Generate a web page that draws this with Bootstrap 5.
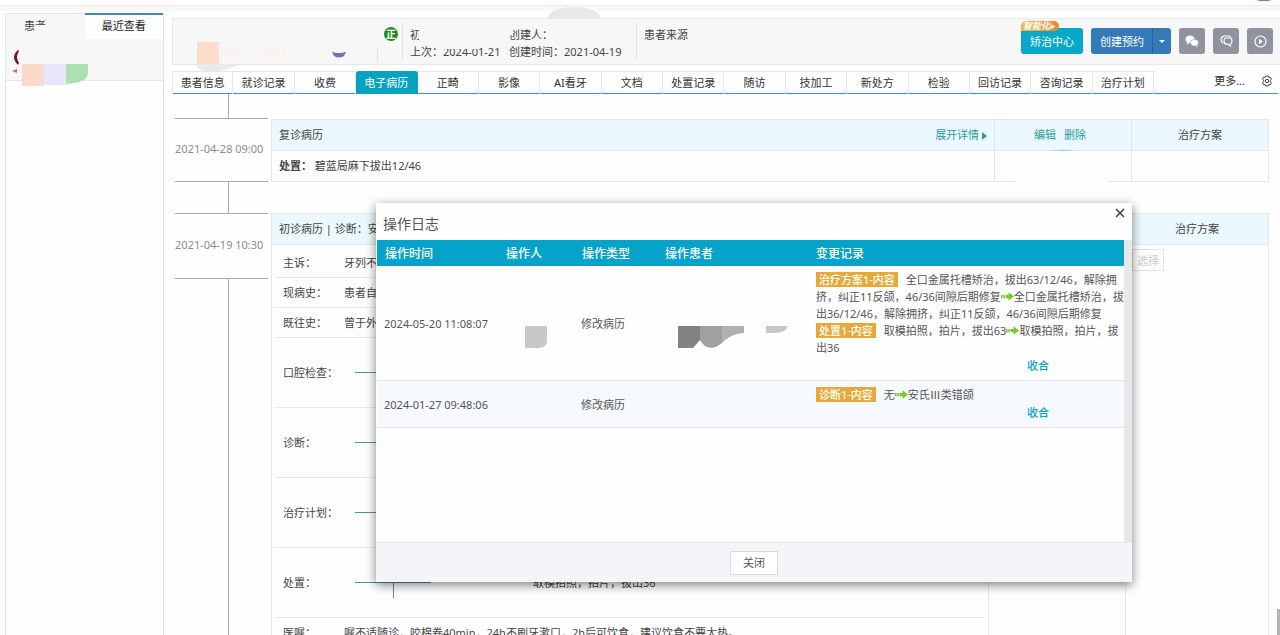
<!DOCTYPE html>
<html lang="zh-CN">
<head>
<meta charset="utf-8">
<meta name="viewport" content="width=device-width, initial-scale=1">
<title>电子病历</title>
<link href="https://cdn.jsdelivr.net/npm/bootstrap@5.3.0/dist/css/bootstrap.min.css" rel="stylesheet">
<style>
body{font-family:"Noto Sans","Noto Sans CJK SC",sans-serif;font-size:11px;line-height:17px;color:#444;background:#fefefe;height:100vh;overflow:hidden}
a{text-decoration:none;color:#2b9c9e}
.btn{font-size:11px;line-height:17px;border-radius:3px}
.shell{min-height:0}
.top-strip{height:13px;border-top:5px solid #fefefe;background:linear-gradient(#ededee 0 1px,#f7f7f8 1px 6px,#fefefe 6px)}
.strip-dot{position:absolute;top:-7px;right:8px;width:16px;height:8px;border-radius:8px;background:#3e9a93}
.smear-arc{position:absolute;left:547px;top:7px;width:54px;height:12px;border-radius:27px 27px 0 0/12px 12px 0 0;background:#e6e9ea}
.side{width:159px;margin-left:5px;border:1px solid #e3e3e3;border-width:0 1px;flex:none}
.side-tabs button{border:0;height:26px;padding:0 0 3px;background:#f7f7f8;border-top:1px solid #e3e3e3;width:50%;font-size:11px;color:#444}
.side-tabs button:first-child{text-align:left;padding-left:18px}
.side-tabs button.on{background:#fefefe;border-top:2px solid #3d8ea6;color:#222}
.side-pane{height:42px;background:#f7f7f8;border-bottom:1px solid #e6e6e6}
.side-art{left:4px;top:34px}
.smudge{position:absolute;background:#f7f7f8}
.page-main{margin-left:8px;min-width:0}
.patient{height:47px;margin-top:5px;background:#f7f7f8;border:1px solid #e8e8e9;border-right:0;padding-right:7px}
.patient .rule{width:1px;height:36px;background:#e2e2e4;flex:none}
.patient-art{width:205px;height:56px;flex:none}
.zheng{width:14px;height:14px;border-radius:50%;background:#1b8f1b;color:#fff;font-size:10px;line-height:14px;text-align:center;font-weight:700;margin:8px 0 0 6px}
.info{padding:7px 0 0 7px}
.head-actions{padding-top:9px}
.btn-ortho,.btn-ortho:hover{background:#05a8c8;color:#fff}
.btn-ortho{width:62px;height:26px;padding:0}
.smart{position:absolute;left:0;top:-7px;height:10px;width:38px;padding-left:2px;border-radius:6px 6px 6px 0;background:linear-gradient(90deg,#f3b955,#e98a35);color:#fff;font:italic 700 9px/10px "Noto Sans CJK SC",sans-serif;white-space:nowrap;z-index:2;overflow:hidden}
.btn-book,.btn-book:hover{background:#337ab7;color:#fff}
.btn-book{height:26px;width:62px;padding:0}
.btn-book.dropdown-toggle-split{width:19px;border-left:1px solid #286494}
.btn-book.dropdown-toggle-split::after{border-width:3px 3px 0;margin:0}
.btn-ico{background:#8f939f;width:26px;height:26px;padding:0}
.tabs-row{margin-top:6px;height:23px;border-bottom:1px solid #3d9bb0;margin-right:2px}
.tabs-row .tab-grid{display:grid;grid-template-columns:repeat(16,minmax(0,1fr));flex:1}
.tab-grid a{border:1px solid #e6e6e6;border-width:1px 1px 0 0;text-align:center;line-height:22px;color:#333;white-space:nowrap}
.tab-grid a:first-child{border-left-width:1px}
.tab-grid a.active{background:#05a3c0;color:#fff;border-color:#05a3c0;border-radius:3px 3px 0 0}
.tab-tools{width:124px;padding:0 5px 4px 0}
.tab-tools a{color:#333}
.records{display:grid;grid-template-columns:93px minmax(0,1fr);column-gap:3px;padding:0 11px 0 3px;min-height:0;flex:1;overflow:hidden}
.rail .stem{margin-left:53px;border-left:1px solid #a8a8a8;height:31px}
.rail .stem.first{height:24px}
.rail .stamp{height:64px;border:1px solid #a8a8a8;border-width:1px 0;display:flex;align-items:center;color:#8c8c8c;white-space:nowrap;padding-bottom:3px}
.rail .stamp.tall{height:66px}
.rec{width:100%;border-collapse:collapse;table-layout:fixed;margin-top:25px}
.rec + .rec{margin-top:31px}
.rec th,.rec td{border:1px solid #e4e7e9;padding:0 7px 2px;height:31px;font-weight:400}
.rec th{background:#ebf8fe}
.rec th.ops{padding-right:13px}
.col-ops{width:137px}
.col-plan-a{width:137px}
.col-plan-b{width:143px}
.rec td.detail{padding:3px 3px 0;height:auto;vertical-align:top}
.rec td.detail ~ td{vertical-align:top;padding:4px 6px}
.item{border-bottom:1px solid #e8e8e8;height:30px;padding-left:8px;white-space:nowrap}
.item.big{height:70px}
.item .lab{width:61px;flex:none}
.tooth{width:76px;height:30px;margin:0 102px 0 11px;background:linear-gradient(#4e90ab,#4e90ab) 0 50%/100% 1px no-repeat,linear-gradient(#4e90ab,#4e90ab) 50% 0/1px 100% no-repeat}
.item.big:not(:nth-child(7)) .tooth{background-size:100% 1px,0 0}
.btn-pick{width:32px;height:22px;border:1px solid #e2e2e2;background:#fefefe;color:#ccc;padding:0;border-radius:0}
.veil{left:1012px;top:149px}
.page-scroll{position:absolute;right:0;bottom:0;width:3px;height:26px;background:#b5b5b8}
.log{position:absolute;left:376px;right:148px;top:203px;background:#fefefe;box-shadow:0 3px 10px rgba(0,0,0,.5);z-index:10;color:#555}
.log-head{height:37px;padding:12px 7px 0}
.log-head h2{font-size:14px;line-height:18px;font-weight:400;margin:0;color:#555}
.log-close{border:0;background:none;padding:0;line-height:0;margin-top:-7px}
.log-body{height:302px;padding:0 8px 0 1px;background:linear-gradient(#e8e8ea,#e8e8ea) 100% 0/8px 100% no-repeat}
.log-table{width:100%;table-layout:fixed;border-collapse:collapse}
.log-table th{background:#05a3c9;color:#fff;height:26px;font-size:12px;padding:0 8px;font-weight:500;white-space:nowrap}
.log-table td{border-bottom:1px solid #e3e5e8;padding:5px 0 5px 7px;white-space:nowrap}
.log-table td:last-child{padding-left:8px}
.log-table tr.alt td{background:#f6f9fd}
.c-time{width:121px}.c-who{width:76px}.c-type{width:83px}.c-patient{width:151px}
.tag{background:#e6a935;color:#fff;display:inline-block;line-height:15px;padding:0 3px;margin-right:8px;font-weight:500}
.arrow{width:13px;height:9px;vertical-align:0}
.fold{display:block;line-height:19px;padding-left:211px;color:#0aa3c2;font-weight:500}
.log-foot{height:40px;background:#f3f5f8;border-top:1px solid #e6e7ea}
.btn-shut{width:48px;height:24px;padding:0;border:1px solid #dcdcde;border-radius:0;background:#fff;color:#555}
.masked{margin-top:28px;display:block}
</style>
</head>
<body class="d-flex flex-column position-relative">
<svg width="0" height="0" class="position-absolute"><defs>
<symbol id="arr" viewBox="0 0 12 8"><path d="M0 2.500h1.500v3H0zM2.200 2.500h1.600v3H2.200zM4.500 2.500H7V0L12 4 7 8V5.500H4.500z" fill="#7bc728"/></symbol>
</defs></svg>
<div class="top-strip flex-shrink-0"></div>
<div class="strip-dot"></div>
<div class="smear-arc"></div>
<div class="shell d-flex flex-grow-1">
  <aside class="side position-relative">
    <div class="side-tabs d-flex"><button type="button">患者</button><button type="button" class="on">最近查看</button></div>
    <div class="side-pane"></div>
    <div class="smudge" style="left:29px;top:12px;width:18px;height:10px"></div>
    <svg class="side-art position-absolute" width="84" height="42" viewBox="0 0 84 42">
      <path d="M8 3Q0 10 8 18L9 16Q5 10 9 4z" fill="#75142b"/><path d="M2 24l5-2v4z" fill="#d0637c"/>
      <path d="M12 17h22v22H12z" fill="#fadac8"/><path d="M34 17h22v21H34z" fill="#e9e4fa"/><path d="M56 17h22v9q0 10-22 11z" fill="#ade0b0"/>
    </svg>
  </aside>
  <main class="page-main d-flex flex-column flex-grow-1">
    <section class="patient d-flex align-items-start flex-shrink-0">
      <svg class="patient-art" viewBox="0 0 205 56">
        <path d="M24 45h43q-18 9-35 7-8-1-8-7z" fill="#e9e9eb"/><path d="M24 23h22v22H24z" fill="#fcdccb"/><path d="M46 23h22v20H46z" fill="#f8f4f3"/><path d="M90 23h22v20H90z" fill="#faf4f0"/>
        <path d="M159 33l4 1h5l5-1-2 4q-5 3-10 0z" fill="#7c6cba"/><path d="M204 29h1v14h-1z" fill="#e2e2e4"/>
      </svg>
      <div class="zheng">正</div>
      <div class="rule mt-1 ms-1"></div>
      <div class="info" style="width:106px"><div>初</div><div>上次：2024-01-21</div></div>
      <div class="info flex-shrink-0 ps-0" style="width:127px"><div>创建人：</div><div>创建时间：2021-04-19</div></div>
      <div class="rule mt-1"></div>
      <div class="info flex-grow-1">患者来源</div>
      <div class="head-actions d-flex gap-2 flex-shrink-0">
        <div class="position-relative"><button type="button" class="btn btn-ortho border-0">矫治中心</button><span class="smart">智能化▸</span></div>
        <div class="btn-group"><button type="button" class="btn btn-book border-0">创建预约</button><button type="button" class="btn btn-book dropdown-toggle dropdown-toggle-split border-top-0 border-bottom-0 border-end-0" aria-label="更多预约"></button></div>
        <button type="button" class="btn btn-ico border-0 d-flex align-items-center justify-content-center" aria-label="微信"><svg width="14" height="12" viewBox="0 0 14 12"><ellipse cx="5" cy="4.200" rx="4.500" ry="3.800" fill="#fff"/><path d="M2 7L1.500 9.500 4.500 8zM12 10l1 2-3-1z" fill="#fff"/><ellipse cx="9.500" cy="7.700" rx="4" ry="3.400" fill="#fff" stroke="#8f939f" stroke-width=".6"/></svg></button>
        <button type="button" class="btn btn-ico border-0 d-flex align-items-center justify-content-center" aria-label="消息"><svg width="13" height="12" viewBox="0 0 13 12" fill="none" stroke="#fff" stroke-width="1.200"><path d="M3 8Q1 7 1 4.500T4 1h4q2 0 3 1"/><path d="M6 3h3.500Q12 3 12 5.800 12 8.500 10.500 9v2L8 9.200H6.500Q4 9 4 6T6 3z"/></svg></button>
        <button type="button" class="btn btn-ico border-0 d-flex align-items-center justify-content-center" aria-label="播放"><svg width="13" height="13" viewBox="0 0 13 13"><circle cx="6.500" cy="6.500" r="5.500" fill="none" stroke="#fff" stroke-width="1.200"/><path d="M5 3.800l4 2.700-4 2.700z" fill="#fff"/></svg></button>
      </div>
    </section>
    <nav class="tabs-row d-flex flex-shrink-0">
      <div class="tab-grid"><a href="#">患者信息</a><a href="#">就诊记录</a><a href="#">收费</a><a href="#" class="active">电子病历</a><a href="#">正畸</a><a href="#">影像</a><a href="#">AI看牙</a><a href="#">文档</a><a href="#">处置记录</a><a href="#">随访</a><a href="#">技加工</a><a href="#">新处方</a><a href="#">检验</a><a href="#">回访记录</a><a href="#">咨询记录</a><a href="#">治疗计划</a></div>
      <div class="tab-tools d-flex justify-content-end align-items-center gap-3"><a href="#">更多...</a><a href="#" aria-label="设置" class="lh-1"><svg width="12" height="12" viewBox="0 0 12 12" fill="none" stroke="#444"><path d="M4.800 1h2.400l.5 1.400 1.500-.3 1.200 2.100-1 1.100v1.400l1 1.100-1.200 2.100-1.500-.3-.5 1.400H4.800l-.5-1.400-1.500.3-1.200-2.100 1-1.100V5.300l-1-1.100 1.200-2.100 1.500.3z"/><circle cx="6" cy="6" r="1.700"/></svg></a></div>
    </nav>
    <div class="records">
      <div class="rail d-flex flex-column">
        <div class="stem first flex-shrink-0"></div>
        <div class="stamp flex-shrink-0">2021-04-28 09:00</div>
        <div class="stem flex-shrink-0"></div>
        <div class="stamp tall flex-shrink-0">2021-04-19 10:30</div>
        <div class="stem flex-grow-1"></div>
      </div>
      <div>
        <table class="rec">
          <colgroup><col><col class="col-ops"><col class="col-plan-a"></colgroup>
          <tr><th><div class="d-flex justify-content-between"><span>复诊病历</span><a href="#">展开详情 <svg width="5" height="8" viewBox="0 0 5 8"><path d="M0 0l5 4-5 4z" fill="#2b9c9e"/></svg></a></div></th><th class="ops text-center"><a href="#">编辑</a><a href="#" class="ms-2">删除</a></th><th class="text-center">治疗方案</th></tr>
          <tr><td><b>处置：</b> 碧蓝局麻下拔出12/46</td><td></td><td></td></tr>
        </table>
        <table class="rec">
          <colgroup><col><col class="col-ops"><col class="col-plan-b"></colgroup>
          <tr><th>初诊病历 | 诊断：安氏</th><th></th><th class="text-center">治疗方案</th></tr>
          <tr>
            <td class="detail">
              <div class="item d-flex align-items-center"><span class="lab">主诉：</span><span>牙列不齐</span></div>
              <div class="item d-flex align-items-center"><span class="lab">现病史：</span><span>患者自觉</span></div>
              <div class="item d-flex align-items-center"><span class="lab">既往史：</span><span>曾于外院</span></div>
              <div class="item big d-flex align-items-center"><span class="lab">口腔检查：</span><span class="tooth"></span></div>
              <div class="item big d-flex align-items-center"><span class="lab">诊断：</span><span class="tooth"></span></div>
              <div class="item big d-flex align-items-center"><span class="lab">治疗计划：</span><span class="tooth"></span></div>
              <div class="item big d-flex align-items-center"><span class="lab">处置：</span><span class="tooth"></span><span>取模拍照，拍片，拔出36</span></div>
              <div class="item d-flex align-items-center"><span class="lab">医嘱：</span><span>嘱不适随诊，咬棉卷40min，24h不刷牙漱口，2h后可饮食，建议饮食不要太热。</span></div>
            </td>
            <td></td>
            <td><button type="button" class="btn btn-pick">选择</button></td>
          </tr>
        </table>
      </div>
    </div>
  </main>
</div>
<!-- masked name fragments -->
<div class="smudge" style="left:419px;top:29px;width:6px;height:13px"></div>
<div class="smudge" style="left:440px;top:42px;width:38px;height:7px"></div>
<div class="smudge" style="left:507px;top:26px;width:6px;height:9px"></div>
<svg class="veil position-absolute" width="98" height="36" viewBox="0 0 98 36"><path d="M38 2q11-3 26 0z" fill="#a9d3dc"/><path d="M0 28q50-8 96 0v5H4z" fill="#fefefe"/></svg>
<div class="page-scroll"></div>

<section class="log" role="dialog" aria-labelledby="logTitle">
  <div class="log-head d-flex justify-content-between align-items-start">
    <h2 id="logTitle">操作日志</h2>
    <button type="button" class="log-close" aria-label="关闭"><svg width="10" height="10" viewBox="0 0 10 10"><path d="M1 1l8 8M9 1L1 9" stroke="#444" stroke-width="1.600"/></svg></button>
  </div>
  <div class="log-body">
    <table class="log-table">
      <colgroup><col class="c-time"><col class="c-who"><col class="c-type"><col class="c-patient"><col></colgroup>
      <thead><tr><th>操作时间</th><th>操作人</th><th>操作类型</th><th>操作患者</th><th>变更记录</th></tr></thead>
      <tbody>
      <tr>
        <td>2024-05-20 11:08:07</td>
        <td><svg class="masked ms-3" width="28" height="22" viewBox="0 0 28 22"><path d="M4 0h22v15q0 6-8 7H4z" fill="#c8c8cb"/></svg></td>
        <td>修改病历</td>
        <td><svg class="masked" width="124" height="22" viewBox="0 0 124 22"><path d="M14 0h22v14l-7 8H14z" fill="#828285"/><path d="M36 0h22v17q-14 11-22-3z" fill="#a0a0a3"/><path d="M58 0h22v7q-12 0-22 10z" fill="#b0b0b2"/><path d="M102 0h22q-2 7-14 7h-8z" fill="#c6c6c8"/></svg></td>
        <td><span class="tag">治疗方案1-内容</span>全口金属托槽矫治，拔出63/12/46，解除拥<br>挤，纠正11反颌，46/36间隙后期修复<svg class="arrow"><use href="#arr"/></svg>全口金属托槽矫治，拔<br>出36/12/46，解除拥挤，纠正11反颌，46/36间隙后期修复<br><span class="tag">处置1-内容</span>取模拍照，拍片，拔出63<svg class="arrow"><use href="#arr"/></svg>取模拍照，拍片，拔<br>出36<a href="#" class="fold">收合</a></td>
      </tr>
      <tr class="alt">
        <td>2024-01-27 09:48:06</td><td></td><td>修改病历</td><td></td>
        <td><span class="tag">诊断1-内容</span>无<svg class="arrow"><use href="#arr"/></svg>安氏Ⅲ类错颌<a href="#" class="fold">收合</a></td>
      </tr>
      </tbody>
    </table>
  </div>
  <div class="log-foot d-flex align-items-center justify-content-center"><button type="button" class="btn btn-shut">关闭</button></div>
</section>
<script src="https://cdn.jsdelivr.net/npm/bootstrap@5.3.0/dist/js/bootstrap.bundle.min.js"></script>
</body>
</html>
